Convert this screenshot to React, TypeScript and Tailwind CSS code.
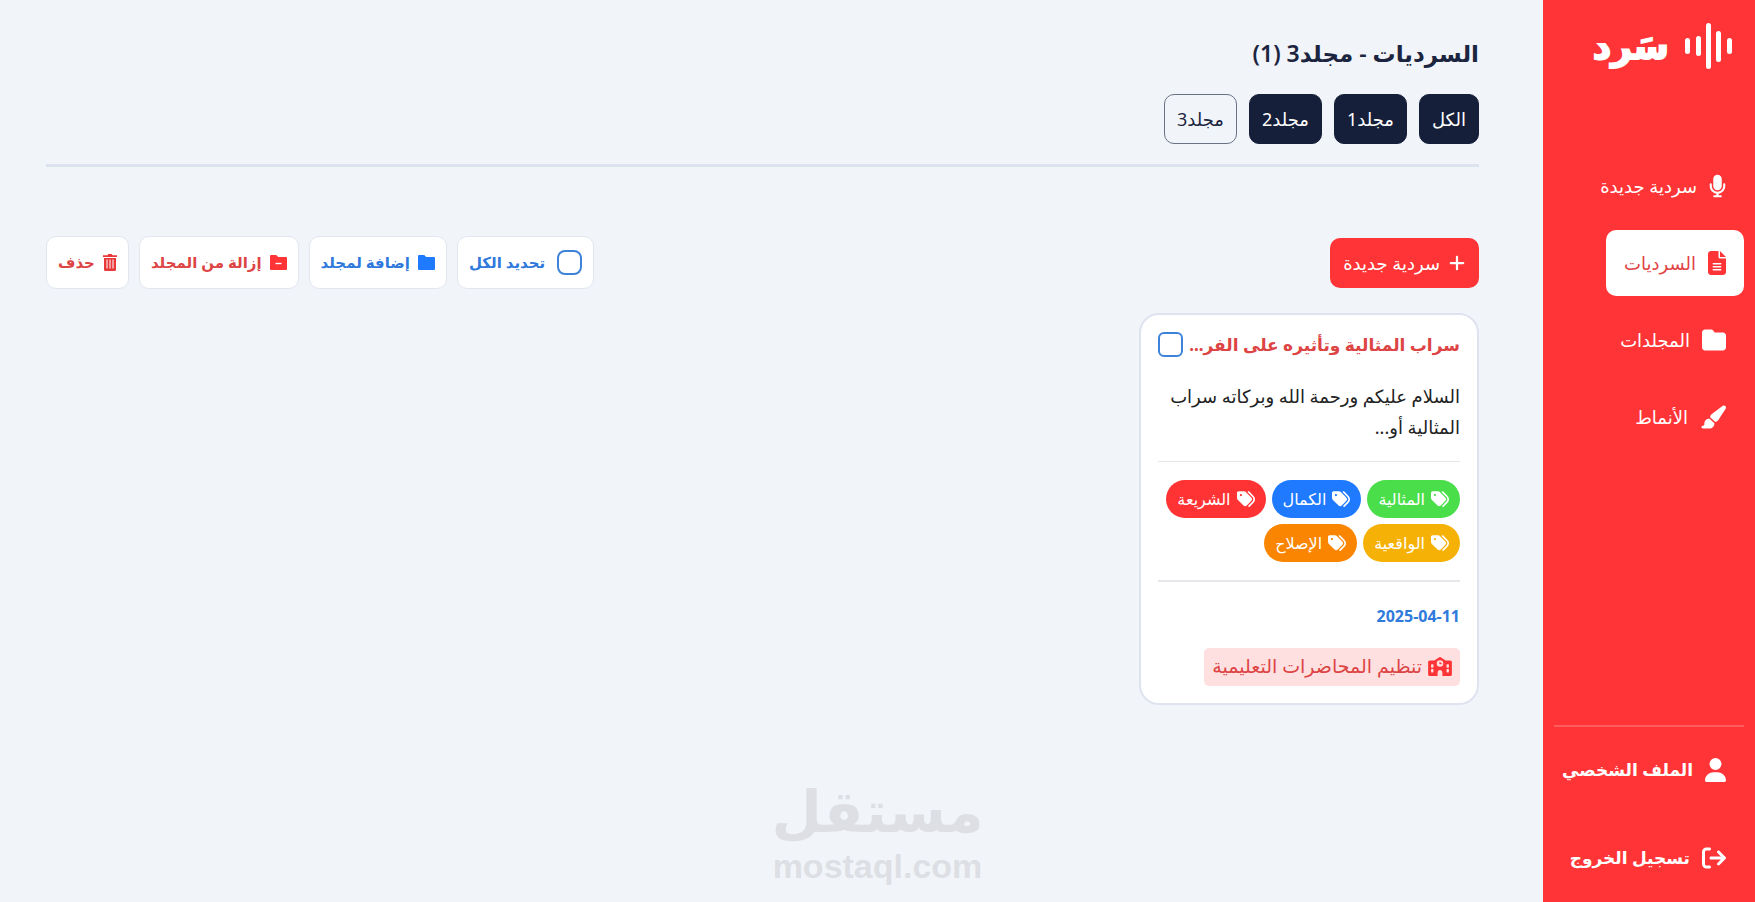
import type { SVGProps } from "react";
import { FaArrowRightFromBracket, FaFileLines, FaFolder, FaMicrophone, FaPaintbrush, FaPlus, FaSchool, FaTags, FaUser } from "react-icons/fa6";

const NAV_LINKS = [
  { href: "#new", label: "سردية جديدة", icon: FaMicrophone, iconClass: "h-6 w-[17px]" },
  { href: "#narratives", label: "السرديات", icon: FaFileLines, iconClass: "h-6 w-[18px] text-[#ff3436]", active: true },
  { href: "#folders", label: "المجلدات", icon: FaFolder, iconClass: "size-6" },
  { href: "#styles", label: "الأنماط", icon: FaPaintbrush, iconClass: "h-6 w-[26px]" },
];

const FOLDERS = ["الكل", "مجلد1", "مجلد2", "مجلد3"];
const ACTIVE_FOLDER = "مجلد3";

const TAGS = [
  { label: "المثالية", color: "bg-[#4ade4a]" },
  { label: "الكمال", color: "bg-[#1f7aff]" },
  { label: "الشريعة", color: "bg-[#ff3234]" },
  { label: "الواقعية", color: "bg-[#f6b106]" },
  { label: "الإصلاح", color: "bg-[#f98500]" },
];

function FolderIcon({ minus = false, ...props }: SVGProps<SVGSVGElement> & { minus?: boolean }) {
  return (
    <svg viewBox="0 0 17 15" fill="currentColor" aria-hidden="true" {...props}>
      <path d="M1 0h5.2l2 2H16a1 1 0 0 1 1 1v11a1 1 0 0 1-1 1H1a1 1 0 0 1-1-1V1a1 1 0 0 1 1-1z" />
      {minus && <path d="M5.5 8.5h6" stroke="#fff" strokeWidth="1.4" />}
    </svg>
  );
}

function BinIcon(props: SVGProps<SVGSVGElement>) {
  return (
    <svg viewBox="0 0 14 17" fill="currentColor" aria-hidden="true" {...props}>
      <path d="M4.5 1.2 5.3 0h3.4l.8 1.2H14V3H0V1.2z" />
      <path d="M1 4h12v11.5a1.5 1.5 0 0 1-1.5 1.5h-9A1.5 1.5 0 0 1 1 15.500z" />
      <path d="M4 5.500v9M7 5.500v9M10 5.500v9" stroke="#fff" strokeWidth="1" />
    </svg>
  );
}

function Logo() {
  return (
    <a href="#home" className="flex items-center gap-4 px-3 text-white">
      <svg viewBox="0 0 47 46" className="h-[46px] w-[47px]" fill="currentColor" aria-hidden="true">
        <rect x="0" y="15" width="5" height="16" rx="2.5" />
        <rect x="11" y="13" width="5" height="20" rx="2.5" />
        <rect x="21" y="0" width="5" height="46" rx="2.5" />
        <rect x="31" y="8" width="5" height="31" rx="2.5" />
        <rect x="42" y="15" width="5" height="16" rx="2.5" />
      </svg>
      <span className="text-4xl leading-[46px] font-bold [-webkit-text-stroke:2px_white]">سَرد</span>
    </a>
  );
}

function Sidebar() {
  return (
    <aside className="flex w-[212px] shrink-0 flex-col bg-[#ff3436] px-[11px] pt-[23px] pb-[11px] text-white">
      <Logo />
      <nav className="mt-[84px] flex flex-col items-start gap-[11px]">
        {NAV_LINKS.map(({ href, label, icon: Icon, iconClass, active }) => (
          <a
            key={href}
            href={href}
            className={`flex h-[66px] items-center gap-3 rounded-[10px] px-[18px] text-lg ${active ? "bg-white text-[#e04345]" : ""}`}
          >
            <Icon className={iconClass} />
            {label}
          </a>
        ))}
      </nav>
      <div className="mt-auto flex flex-col items-start gap-[22px] border-t-2 border-white/20 pt-[10px] text-[17px] font-bold whitespace-nowrap">
        <a href="#profile" className="flex h-[66px] items-center gap-3 px-[18px]">
          <FaUser className="h-6 w-[21px]" />
          الملف الشخصي
        </a>
        <button type="button" className="flex h-[66px] items-center gap-3 px-[18px]">
          <FaArrowRightFromBracket className="size-6" />
          تسجيل الخروج
        </button>
      </div>
    </aside>
  );
}

function NarrativeCard() {
  return (
    <article className="w-[340px] rounded-[20px] border-2 border-[#dfe3ef] bg-white p-[17px]">
      <div className="flex items-center justify-between">
        <h2 className="text-[17px] font-bold whitespace-nowrap text-[#dd4444]">
          <label htmlFor="narrative">سراب المثالية وتأثيره على الفر...</label>
        </h2>
        <input id="narrative" type="checkbox" className="size-[25px] shrink-0 appearance-none rounded-md border-2 border-[#3d83d9] bg-white" />
      </div>
      <p className="mt-[23px] text-lg leading-[31px] text-[#222]">السلام عليكم ورحمة الله وبركاته سراب المثالية أو...</p>
      <ul className="mt-[18px] flex flex-wrap gap-[6px] border-t border-b-2 border-[#e5e7eb] py-[18px]">
        {TAGS.map((tag) => (
          <li key={tag.label} className={`flex h-[38px] items-center gap-[6px] rounded-full px-[11px] text-base text-white ${tag.color}`}>
            <FaTags className="size-[18px]" />
            {tag.label}
          </li>
        ))}
      </ul>
      <time dateTime="2025-04-11" className="mt-5 block text-base leading-7 font-bold text-[#2f7bdc]">
        2025-04-11
      </time>
      <p className="mt-[18px] flex h-[38px] w-fit items-center gap-[6px] rounded-[5px] bg-[#ffe0e1] px-2 text-[19px] whitespace-nowrap text-[#dd4444]">
        <FaSchool className="h-[19px] w-6 text-[#ff3436]" />
        تنظيم المحاضرات التعليمية
      </p>
    </article>
  );
}

const BULK_BUTTON = "flex h-[53px] items-center gap-2 rounded-[10px] border border-[#e1e6ef] bg-white px-[11px] text-[15px] font-bold";

function Toolbar() {
  return (
    <div className="flex items-center justify-between">
      <button type="button" className="flex h-[50px] items-center gap-2 rounded-[10px] bg-[#ff3436] px-[13px] text-lg text-white">
        <FaPlus className="size-[18px]" />
        سردية جديدة
      </button>
      <div className="flex gap-[10px]">
        <label className={`${BULK_BUTTON} text-[#3079dc]`}>
          <input type="checkbox" className="me-1 size-[25px] appearance-none rounded-lg border-2 border-[#3d83d9] bg-white" />
          تحديد الكل
        </label>
        <button type="button" className={`${BULK_BUTTON} text-[#3079dc]`}>
          <FolderIcon className="h-[15px] w-[17px] text-[#1f7aff]" />
          إضافة لمجلد
        </button>
        <button type="button" className={`${BULK_BUTTON} text-[#dd4444]`}>
          <FolderIcon minus className="h-[15px] w-[17px] text-[#ff3436]" />
          إزالة من المجلد
        </button>
        <button type="button" className={`${BULK_BUTTON} text-[#dd4444]`}>
          <BinIcon className="h-[17px] w-[14px] text-[#e8383a]" />
          حذف
        </button>
      </div>
    </div>
  );
}

function Watermark() {
  return (
    <div className="pointer-events-none absolute inset-x-0 bottom-4 flex flex-col items-center font-bold text-[#dddfe4]">
      <span className="font-['DejaVu_Sans',sans-serif] text-[58px] leading-[68px]">مستقل</span>
      <span className="font-['Liberation_Sans',sans-serif] text-[34px] leading-10">mostaql.com</span>
    </div>
  );
}

export default function App() {
  return (
    <div dir="rtl" className="relative flex min-h-screen bg-[#f1f5fa] font-['Noto_Sans','DejaVu_Sans',sans-serif]">
      <Sidebar />
      <main className="min-w-0 flex-1 pt-[35px] pr-16 pb-5 pl-[46px]">
        <h1 className="text-[23px] leading-9 font-semibold text-[#1c2540]">السرديات - مجلد3 (1)</h1>
        <div className="mt-[23px] flex gap-3 border-b-[3px] border-[#dde3ee] pb-5">
          {FOLDERS.map((folder) => (
            <button
              key={folder}
              type="button"
              className={`h-[50px] rounded-[10px] border px-3 text-lg ${folder === ACTIVE_FOLDER ? "border-[#6b7285] text-[#1c2540]" : "border-[#161f3a] bg-[#161f3a] text-white"}`}
            >
              {folder}
            </button>
          ))}
        </div>
        <div className="mt-[69px]">
          <Toolbar />
        </div>
        <div className="mt-6">
          <NarrativeCard />
        </div>
      </main>
      <Watermark />
    </div>
  );
}
